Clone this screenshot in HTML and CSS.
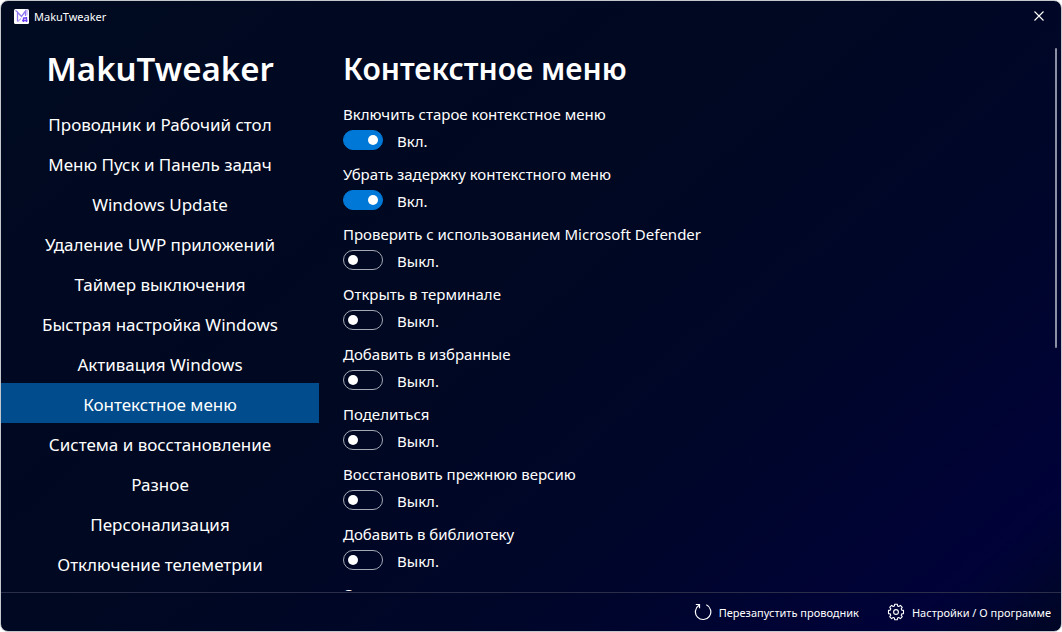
FILE: index.html
```html
<!DOCTYPE html>
<html lang="ru">
<head>
<meta charset="utf-8">
<title>MakuTweaker</title>
<link rel="stylesheet" href="styles.css">
</head>
<body>
<div class="window">
  <header class="titlebar">
    <svg class="logo" viewBox="0 0 15 15" aria-hidden="true">
      <rect width="15" height="15" rx="1.5" fill="#fff"/>
      <path d="M1.500 1.500 3.500 3v9.500M3.200 3l4.300 4.500L11.500 2v5" fill="none" stroke="#8f76f0" stroke-width="1.300"/>
      <path d="M3.800 12.500 7 9.500M11.500 2l1.500-.7v5" fill="none" stroke="#b9a6fa" stroke-width="1.100"/>
      <path d="M9.500 8.500v4.500M12.500 8v5M8 11.500h5.500M9.500 9l3 0" fill="none" stroke="#6a3cf2" stroke-width="1.300"/>
    </svg>
    <span class="titlebar-text">MakuTweaker</span>
    <button class="close" type="button" aria-label="Закрыть">
      <svg viewBox="0 0 10 10" aria-hidden="true"><path d="M.5.5l9 9M9.500.5l-9 9" stroke="#fff" stroke-width="1.100"/></svg>
    </button>
  </header>
  <div class="body">
    <nav class="sidebar">
      <div class="brand">MakuTweaker</div>
      <a class="nav-item" href="#explorer">Проводник и Рабочий стол</a>
      <a class="nav-item" href="#start">Меню Пуск и Панель задач</a>
      <a class="nav-item" href="#update">Windows Update</a>
      <a class="nav-item" href="#uwp">Удаление UWP приложений</a>
      <a class="nav-item" href="#timer">Таймер выключения</a>
      <a class="nav-item" href="#quick">Быстрая настройка Windows</a>
      <a class="nav-item" href="#activation">Активация Windows</a>
      <a class="nav-item active" href="#context" aria-current="page">Контекстное меню</a>
      <a class="nav-item" href="#system">Система и восстановление</a>
      <a class="nav-item" href="#misc">Разное</a>
      <a class="nav-item" href="#personal">Персонализация</a>
      <a class="nav-item" href="#telemetry">Отключение телеметрии</a>
    </nav>
    <main class="content">
      <h1 class="heading">Контекстное меню</h1>
      <div class="setting"><label for="s1">Включить старое контекстное меню</label><div class="row"><input class="switch" type="checkbox" role="switch" id="s1" checked><span class="state">Вкл.</span></div></div>
      <div class="setting"><label for="s2">Убрать задержку контекстного меню</label><div class="row"><input class="switch" type="checkbox" role="switch" id="s2" checked><span class="state">Вкл.</span></div></div>
      <div class="setting"><label for="s3">Проверить с использованием Microsoft Defender</label><div class="row"><input class="switch" type="checkbox" role="switch" id="s3"><span class="state">Выкл.</span></div></div>
      <div class="setting"><label for="s4">Открыть в терминале</label><div class="row"><input class="switch" type="checkbox" role="switch" id="s4"><span class="state">Выкл.</span></div></div>
      <div class="setting"><label for="s5">Добавить в избранные</label><div class="row"><input class="switch" type="checkbox" role="switch" id="s5"><span class="state">Выкл.</span></div></div>
      <div class="setting"><label for="s6">Поделиться</label><div class="row"><input class="switch" type="checkbox" role="switch" id="s6"><span class="state">Выкл.</span></div></div>
      <div class="setting"><label for="s7">Восстановить прежнюю версию</label><div class="row"><input class="switch" type="checkbox" role="switch" id="s7"><span class="state">Выкл.</span></div></div>
      <div class="setting"><label for="s8">Добавить в библиотеку</label><div class="row"><input class="switch" type="checkbox" role="switch" id="s8"><span class="state">Выкл.</span></div></div>
      <div class="setting"><label for="s9">Отправить</label><div class="row"><input class="switch" type="checkbox" role="switch" id="s9"></div></div>
    </main>
    <div class="scroll-thumb"></div>
  </div>
  <footer class="footer">
    <button class="action" type="button">
      <svg class="icon" viewBox="0 0 18 18" aria-hidden="true"><path d="M12.300 1.800A7.700 7.700 0 1 1 5 2.300M1.800 1.500H5.500V5.300" fill="none" stroke="#fff" stroke-width="1.200"/></svg>
      <span>Перезапустить проводник</span>
    </button>
    <button class="action" type="button">
      <svg class="icon" viewBox="0 0 18 18" aria-hidden="true"><g fill="none" stroke="#fff" stroke-width="1.100" stroke-linejoin="round"><path d="M7.700 1.200h2.600l.3 1.800 1.200.5 1.600-1.100 1.900 1.900-1.100 1.600.5 1.200 1.800.3v3.200l-1.800.3-.5 1.200 1.100 1.600-1.900 1.900-1.600-1.100-1.200.5-.3 1.800H7.700l-.3-1.800-1.200-.5-1.600 1.100-1.900-1.900 1.100-1.600-.5-1.200-1.800-.3V7.400l1.800-.3.5-1.200-1.100-1.600 1.900-1.900 1.600 1.100 1.200-.5z"/><circle cx="9" cy="9" r="2.400"/></g></svg>
      <span>Настройки / О программе</span>
    </button>
  </footer>
</div>
</body>
</html>
```
FILE: styles.css
```css
* { box-sizing: border-box; }
html, body { height: 100%; margin: 0; background: #fff; }
body { font-family: "Noto Sans", "Open Sans", sans-serif; color: #fff; }
button { padding: 0; border: 0; background: none; color: inherit; font: inherit; }

.window {
  display: flex;
  flex-direction: column;
  height: 100vh;
  overflow: hidden;
  border: 1px solid #c4c8cc;
  border-radius: 8px;
  background: linear-gradient(140deg, #000a20 0%, #000822 45%, #000629 68%, #000238 91%, #000430 95%, #000624 100%);
}

.titlebar { display: flex; flex: none; align-items: center; height: 30px; padding-left: 13px; }
.logo { width: 15px; height: 15px; }
.titlebar-text { flex: 1; padding-left: 5px; font-size: 11px; }
.close { display: grid; place-items: center; width: 44px; height: 30px; }
.close svg { width: 10px; height: 10px; }

.body { position: relative; display: flex; flex: 1; min-height: 0; }
.sidebar { flex: none; width: 318px; overflow: hidden; text-align: center; }
.brand { height: 72px; padding-top: 14px; font-size: 33px; line-height: 48px; font-weight: 600; }
.nav-item { display: block; height: 40px; padding-top: 4px; color: inherit; font-size: 17px; line-height: 36px; text-decoration: none; }
.nav-item.active { background: #004c8c; }

.content { flex: 1; min-width: 0; margin-bottom: 1px; padding: 16px 24px 0; overflow: hidden; }
.heading { margin: 0 0 13px; font-size: 30px; line-height: 44px; font-weight: 600; }
.setting { height: 60px; font-size: 15px; line-height: 20px; }
.setting label { display: block; }
.row { display: flex; gap: 14px; padding-top: 6px; }
.state { padding-top: 1px; }
.switch {
  appearance: none;
  display: flex;
  align-items: center;
  width: 40px;
  height: 20px;
  margin: 0;
  padding: 0 4px;
  border: 1px solid #a4a8b4;
  border-radius: 10px;
}
.switch::before { content: ""; width: 10px; height: 10px; border-radius: 50%; background: #fff; }
.switch:checked { justify-content: flex-end; border-color: #0078d7; background: #0078d7; }

.scroll-thumb { position: absolute; top: 17px; right: 4px; width: 2px; height: 300px; border-radius: 1px; background: #8c90a4; }

.footer {
  display: flex;
  flex: none;
  align-items: center;
  justify-content: flex-end;
  gap: 28px;
  height: 39px;
  padding-right: 10px;
  border-top: 1px solid #2a2e48;
  font-size: 11px;
}
.action { display: flex; align-items: center; gap: 7px; }
.icon { width: 18px; height: 18px; }
```
